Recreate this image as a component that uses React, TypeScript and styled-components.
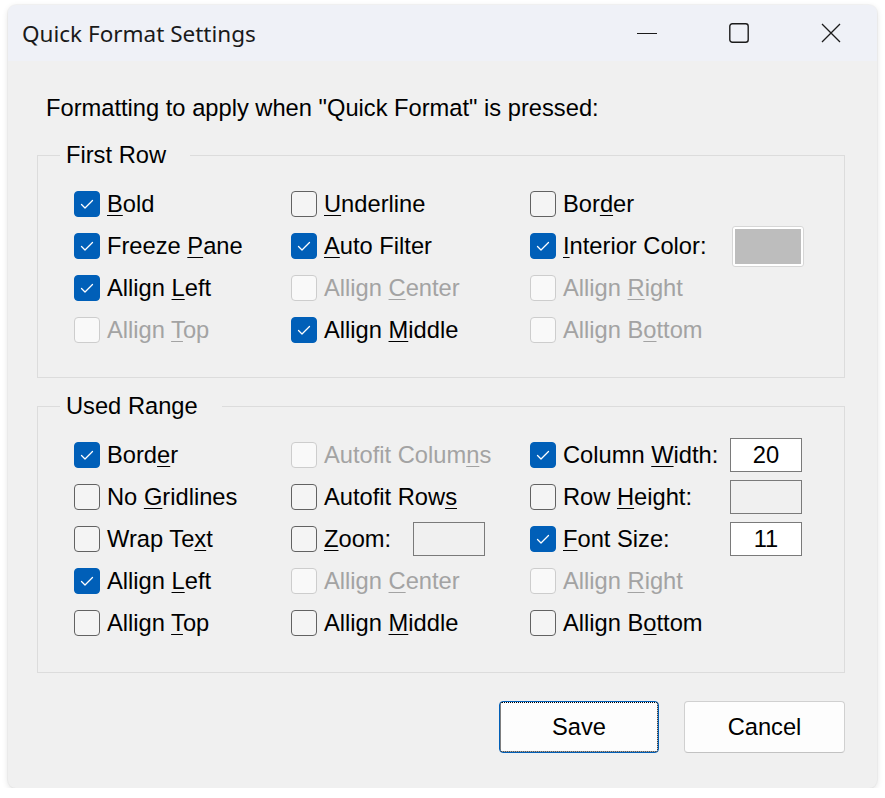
import React from "react";
import styled, { createGlobalStyle, css } from "styled-components";

const Global = createGlobalStyle`
  html, body { margin: 0; padding: 0; background: #ffffff; }
  body { font-family: "Liberation Sans", Arial, sans-serif; }
`;

const Window = styled.div`
  margin: 5px 0 0 8px;
  width: 869px;
  height: 783px;
  border-radius: 8px;
  overflow: hidden;
  background: #f0f0f0;
  box-shadow: 0 2px 6px rgba(0, 0, 0, 0.12), 0 0 0 1px rgba(0, 0, 0, 0.03);
  display: flex;
  flex-direction: column;
`;

const TitleBar = styled.div`
  height: 56px;
  flex: none;
  display: flex;
  align-items: center;
  background: #eff1f7;
`;

const Title = styled.div`
  flex: 1;
  padding-left: 14px;
  font-family: "Noto Sans", "Open Sans", sans-serif;
  font-size: 22.5px;
  color: #1a1a1a;
  white-space: nowrap;
`;

const CaptionButton = styled.div`
  width: 92px;
  height: 56px;
  display: flex;
  align-items: center;
  justify-content: center;
  color: #1b1b1b;
`;

const Body = styled.div`
  display: flex;
  flex-direction: column;
  padding: 33px 32px 0 29px;
`;

const Prompt = styled.div`
  margin-left: 9px;
  font-size: 23.7px;
  line-height: 28px;
  color: #000;
`;

const Group = styled.fieldset<{ $top: number; $bottom: number; $gap: number }>`
  margin: ${(p) => p.$gap}px 0 0 0;
  padding: ${(p) => p.$top}px 0 ${(p) => p.$bottom}px 0;
  border: 1px solid #dcdcdc;
  min-inline-size: 0;
`;

const Legend = styled.legend`
  margin-left: 22px;
  padding: 0 24px 0 6px;
  font-size: 23.7px;
  line-height: 28px;
  color: #000;
`;

const Grid = styled.div<{ $rows: number }>`
  display: grid;
  padding-left: 36px;
  grid-template-columns: 217px 239px 1fr;
  grid-template-rows: repeat(${(p) => p.$rows}, 42px);
  grid-auto-flow: column;
`;

const Row = styled.div`
  display: flex;
  align-items: center;
  gap: 7px;
`;

type State = "on" | "off" | "disabled";

const Box = styled.span<{ $state: State }>`
  flex: none;
  box-sizing: border-box;
  width: 26px;
  height: 26px;
  border-radius: 4px;
  display: flex;
  align-items: center;
  justify-content: center;
  ${(p) =>
    p.$state === "on"
      ? css`
          background: #005fb8;
          border: 1px solid #005fb8;
        `
      : p.$state === "off"
      ? css`
          background: #f4f4f4;
          border: 1.5px solid #626262;
        `
      : css`
          background: #f9f9f9;
          border: 1.5px solid #cdcdcd;
        `}
`;

const Label = styled.span<{ $disabled?: boolean; $w?: number }>`
  font-size: 23.7px;
  line-height: 28px;
  white-space: nowrap;
  color: ${(p) => (p.$disabled ? "#a3a3a3" : "#000")};
  ${(p) => (p.$w ? `width: ${p.$w}px; flex: none;` : "")}
`;

const Mn = styled.u`
  text-decoration-thickness: 1px;
  text-underline-offset: 3px;
`;

const TextBox = styled.div<{ $filled: boolean }>`
  box-sizing: border-box;
  width: 72px;
  height: 34px;
  border: 1px solid #7a7a7a;
  background: ${(p) => (p.$filled ? "#ffffff" : "#f0f0f0")};
  font-size: 23.7px;
  line-height: 32px;
  text-align: center;
  color: #000;
`;

const Swatch = styled.div`
  box-sizing: border-box;
  margin-left: 2px;
  width: 72px;
  height: 41px;
  border: 1px solid #d6d6d6;
  border-radius: 3px;
  background: #ffffff;
  padding: 2px;
  display: flex;
`;

const SwatchFill = styled.div`
  flex: 1;
  background: #bdbdbd;
`;

const ButtonRow = styled.div`
  display: flex;
  justify-content: flex-end;
  gap: 25px;
  margin-top: 28px;
`;

const Button = styled.button<{ $default?: boolean; $w: number }>`
  position: relative;
  box-sizing: border-box;
  width: ${(p) => p.$w}px;
  height: 52px;
  border-radius: 4px;
  background: #fdfdfd;
  font-family: "Liberation Sans", Arial, sans-serif;
  font-size: 23.7px;
  color: #000;
  padding: 0;
  border: 1px solid ${(p) => (p.$default ? "#005fb8" : "#d0d0d0")};
  border-bottom-color: ${(p) => (p.$default ? "#005fb8" : "#c2c2c2")};
  ${(p) =>
    p.$default &&
    css`
      &::after {
        content: "";
        position: absolute;
        inset: 0;
        border: 1px dotted #000;
        border-radius: 2px;
      }
    `}
`;

function Mnemonic({ text }: { text: string }) {
  const i = text.indexOf("&");
  if (i < 0) return <>{text}</>;
  return (
    <>
      {text.slice(0, i)}
      <Mn>{text[i + 1]}</Mn>
      {text.slice(i + 2)}
    </>
  );
}

type Extra =
  | { kind: "swatch" }
  | { kind: "box"; value: string; filled: boolean };

type Item = { label: string; state: State; w?: number; extra?: Extra };

function Check({ state }: { state: State }) {
  return (
    <Box $state={state}>
      {state === "on" && (
        <svg width="26" height="26" viewBox="0 0 26 26" style={{ margin: -1 }}>
          <path
            d="M7.5 13.5 L11 17 L18.5 9.5"
            fill="none"
            stroke="#fff"
            strokeWidth="1.3"
            strokeLinecap="round"
            strokeLinejoin="round"
          />
        </svg>
      )}
    </Box>
  );
}

function CheckRow({ item }: { item: Item }) {
  return (
    <Row>
      <Check state={item.state} />
      <Label $disabled={item.state === "disabled"} $w={item.w}>
        <Mnemonic text={item.label} />
      </Label>
      {item.extra?.kind === "swatch" && (
        <Swatch>
          <SwatchFill />
        </Swatch>
      )}
      {item.extra?.kind === "box" && (
        <TextBox $filled={item.extra.filled}>{item.extra.value}</TextBox>
      )}
    </Row>
  );
}

const firstRow: Item[] = [
  { label: "&Bold", state: "on" },
  { label: "Freeze &Pane", state: "on" },
  { label: "Allign &Left", state: "on" },
  { label: "Allign &Top", state: "disabled" },
  { label: "&Underline", state: "off" },
  { label: "&Auto Filter", state: "on" },
  { label: "Allign &Center", state: "disabled" },
  { label: "Allign &Middle", state: "on" },
  { label: "Bor&der", state: "off" },
  { label: "&Interior Color:", state: "on", w: 160, extra: { kind: "swatch" } },
  { label: "Allign &Right", state: "disabled" },
  { label: "Allign B&ottom", state: "disabled" },
];

const usedRange: Item[] = [
  { label: "Bord&er", state: "on" },
  { label: "No &Gridlines", state: "off" },
  { label: "Wrap Te&xt", state: "off" },
  { label: "Allign &Left", state: "on" },
  { label: "Allign &Top", state: "off" },
  { label: "Autofit Colum&ns", state: "disabled" },
  { label: "Autofit Row&s", state: "off" },
  { label: "&Zoom:", state: "off", w: 82, extra: { kind: "box", value: "", filled: false } },
  { label: "Allign &Center", state: "disabled" },
  { label: "Allign &Middle", state: "off" },
  { label: "Column &Width:", state: "on", w: 160, extra: { kind: "box", value: "20", filled: true } },
  { label: "Row &Height:", state: "off", w: 160, extra: { kind: "box", value: "", filled: false } },
  { label: "&Font Size:", state: "on", w: 160, extra: { kind: "box", value: "11", filled: true } },
  { label: "Allign &Right", state: "disabled" },
  { label: "Allign B&ottom", state: "off" },
];

export default function App() {
  return (
    <>
      <Global />
      <Window>
        <TitleBar>
          <Title>Quick Format Settings</Title>
          <CaptionButton>
            <svg width="20" height="20" viewBox="0 0 20 20">
              <path d="M0 10.5 H20" stroke="currentColor" strokeWidth="1.2" />
            </svg>
          </CaptionButton>
          <CaptionButton>
            <svg width="20" height="20" viewBox="0 0 20 20">
              <rect x="0.8" y="0.8" width="18.4" height="18.4" rx="2.5" fill="none" stroke="currentColor" strokeWidth="1.4" />
            </svg>
          </CaptionButton>
          <CaptionButton>
            <svg width="20" height="20" viewBox="0 0 20 20">
              <path d="M1 1 L19 19 M19 1 L1 19" stroke="currentColor" strokeWidth="1.3" />
            </svg>
          </CaptionButton>
        </TitleBar>
        <Body>
          <Prompt>Formatting to apply when "Quick Format" is pressed:</Prompt>
          <Group $gap={19} $top={14} $bottom={26}>
            <Legend>First Row</Legend>
            <Grid $rows={4}>
              {firstRow.map((it, i) => (
                <CheckRow key={i} item={it} />
              ))}
            </Grid>
          </Group>
          <Group $gap={14} $top={14} $bottom={28}>
            <Legend>Used Range</Legend>
            <Grid $rows={5}>
              {usedRange.map((it, i) => (
                <CheckRow key={i} item={it} />
              ))}
            </Grid>
          </Group>
          <ButtonRow>
            <Button $default $w={160}>Save</Button>
            <Button $w={161}>Cancel</Button>
          </ButtonRow>
        </Body>
      </Window>
    </>
  );
}
